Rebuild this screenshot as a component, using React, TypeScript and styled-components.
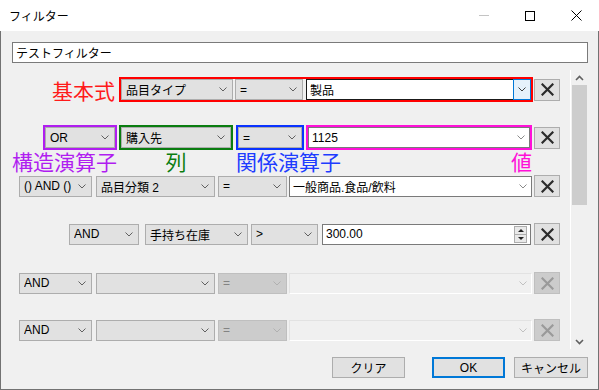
import React from "react";
import styled, { createGlobalStyle, css } from "styled-components";

const Global = createGlobalStyle`
  html, body { margin: 0; padding: 0; background: #ffffff; }
  * { box-sizing: border-box; }
`;

const UI_FONT = `"Liberation Sans", "Noto Sans CJK JP", sans-serif`;

const Win = styled.div`
  width: 599px;
  height: 390px;
  display: flex;
  flex-direction: column;
  background: #ffffff;
  font-family: ${UI_FONT};
  font-size: 12px;
  color: #000;
`;

const TitleBar = styled.div`
  height: 31px;
  flex: none;
  display: flex;
  align-items: center;
  background: #ffffff;
`;

const Title = styled.div`
  flex: 1;
  padding-left: 9px;
  font-family: "Noto Sans CJK JP", sans-serif;
  font-size: 12px;
`;

const Caption = styled.div`
  width: 46px;
  height: 31px;
  display: flex;
  align-items: center;
  justify-content: center;
`;

const Body = styled.div`
  flex: 1;
  display: flex;
  flex-direction: column;
  background: #f0f0f0;
  border: 1px solid #727272;
  border-top: none;
  padding: 11px 10px 0 11px;
`;

const NameInput = styled.div`
  width: 576px;
  height: 21px;
  flex: none;
  border: 1px solid #7a7a7a;
  background: #ffffff;
  display: flex;
  align-items: center;
  padding-left: 3px;
  font-family: "Noto Sans CJK JP", sans-serif;
`;

const ScrollArea = styled.div`
  margin-top: 7px;
  width: 576px;
  height: 279px;
  flex: none;
  display: flex;
`;

const Content = styled.div`
  flex: 1;
  display: flex;
  flex-direction: column;
  overflow: hidden;
`;

const Scrollbar = styled.div`
  width: 18px;
  flex: none;
  border-left: 1px solid #ffffff;
  background: #f0f0f0;
  display: flex;
  flex-direction: column;
`;

const ScrollArrow = styled.div`
  height: 15px;
  display: flex;
  align-items: center;
  justify-content: center;
`;

const Thumb = styled.div`
  margin: 0 1px 0 1px;
  height: 120px;
  background: #cdcdcd;
`;

const ScrollSpacer = styled.div`
  flex: 1;
`;

const Row = styled.div<{ $top: number; $indent: number }>`
  display: flex;
  align-items: center;
  margin-top: ${(p) => p.$top}px;
  margin-left: ${(p) => p.$indent}px;
  height: 22px;
`;

const BoxRow = styled(Row)`
  height: 25px;
`;

const SideLabel = styled.div<{ $color: string }>`
  width: 103px;
  display: flex;
  justify-content: flex-end;
  margin-right: 4px;
  color: ${(p) => p.$color};
  font-family: "Noto Sans CJK JP", sans-serif;
  font-size: 21px;
  line-height: 22px;
  white-space: nowrap;
`;

const Frame = styled.div<{ $color: string; $ml?: number }>`
  display: flex;
  align-items: center;
  border: 2px solid ${(p) => p.$color};
  margin-left: ${(p) => p.$ml ?? 0}px;
`;

const Combo = styled.div<{ $w: number; $ml?: number; $disabled?: boolean }>`
  width: ${(p) => p.$w}px;
  margin-left: ${(p) => p.$ml ?? 0}px;
  height: 21px;
  flex: none;
  display: flex;
  align-items: center;
  padding: 0 5px 0 4px;
  background: #e1e1e1;
  border: 1px solid #adadad;
  color: #000;
  white-space: nowrap;
  ${(p) =>
    p.$disabled &&
    css`
      background: #cccccc;
      border-color: #bfbfbf;
      color: #838383;
    `}
`;

const ComboText = styled.span`
  flex: 1;
  overflow: hidden;
  font-family: ${UI_FONT};
`;

const Field = styled.div<{ $w: number; $ml?: number; $variant?: "normal" | "focus" | "disabled" }>`
  width: ${(p) => p.$w}px;
  margin-left: ${(p) => p.$ml ?? 0}px;
  height: 21px;
  flex: none;
  display: flex;
  align-items: center;
  padding-left: 3px;
  background: #ffffff;
  border: 1px solid #7a7a7a;
  white-space: nowrap;
  ${(p) =>
    p.$variant === "focus" &&
    css`
      border-color: #1a1a1a;
    `}
  ${(p) =>
    p.$variant === "disabled" &&
    css`
      background: #f0f0f0;
      border-color: #e2e2e2;
      border-right-color: #ffffff;
      border-bottom-color: #ffffff;
    `}
`;

const FieldText = styled.span`
  flex: 1;
  font-family: ${UI_FONT};
`;

const DropBtn = styled.div`
  width: 18px;
  height: 21px;
  margin: -1px -1px -1px 0;
  display: flex;
  align-items: center;
  justify-content: center;
  background: #e5f1fb;
  border: 1px solid #0078d7;
`;

const FieldChevron = styled.div`
  width: 17px;
  display: flex;
  align-items: center;
  justify-content: center;
`;

const Spinner = styled.div`
  width: 13px;
  height: 17px;
  margin-right: 3px;
  display: flex;
  flex-direction: column;
  border: 1px solid #adadad;
  background: #e9e9e9;
`;

const SpinHalf = styled.div<{ $up?: boolean }>`
  flex: 1;
  display: flex;
  align-items: center;
  justify-content: center;
  ${(p) => p.$up && css`border-bottom: 1px solid #adadad;`}
`;

const Tri = styled.div<{ $up?: boolean }>`
  width: 0;
  height: 0;
  border-left: 3px solid transparent;
  border-right: 3px solid transparent;
  ${(p) =>
    p.$up
      ? css`border-bottom: 3px solid #222;`
      : css`border-top: 3px solid #222;`}
`;

const DelBtn = styled.div<{ $ml: number; $disabled?: boolean }>`
  width: 26px;
  height: 22px;
  margin-left: ${(p) => p.$ml}px;
  flex: none;
  display: flex;
  align-items: center;
  justify-content: center;
  background: ${(p) => (p.$disabled ? "#cccccc" : "#e1e1e1")};
  border: 1px solid ${(p) => (p.$disabled ? "#bfbfbf" : "#adadad")};
`;

const LabelRow = styled.div`
  display: flex;
  height: 22px;
  margin-left: 31px;
  font-family: "Noto Sans CJK JP", sans-serif;
  font-size: 21px;
  line-height: 22px;
  white-space: nowrap;
`;

const LabelCell = styled.div<{ $w: number; $ml: number; $color: string; $align: "flex-start" | "center" | "flex-end" }>`
  width: ${(p) => p.$w}px;
  margin-left: ${(p) => p.$ml}px;
  display: flex;
  justify-content: ${(p) => p.$align};
  color: ${(p) => p.$color};
`;

const Footer = styled.div`
  margin-top: 8px;
  display: flex;
  padding-left: 320px;
`;

const Button = styled.div<{ $w: number; $ml: number; $default?: boolean }>`
  width: ${(p) => p.$w}px;
  margin-left: ${(p) => p.$ml}px;
  height: 21px;
  display: flex;
  align-items: center;
  justify-content: center;
  background: #e1e1e1;
  border: ${(p) => (p.$default ? "2px solid #0078d7" : "1px solid #adadad")};
  font-family: ${UI_FONT};
`;

const Chevron = ({ color = "#606060" }: { color?: string }) => (
  <svg width="8" height="5" viewBox="0 0 8 5">
    <polyline points="0.5,0.5 4,4 7.5,0.5" fill="none" stroke={color} strokeWidth="1" />
  </svg>
);

const XIcon = ({ color = "#2b2b2b" }: { color?: string }) => (
  <svg width="13" height="13" viewBox="0 0 13 13">
    <path d="M1.5 1.5 L11.5 11.5 M11.5 1.5 L1.5 11.5" stroke={color} strokeWidth="2.2" strokeLinecap="square" />
  </svg>
);

const ComboBox = ({ w, ml, text, disabled }: { w: number; ml?: number; text: string; disabled?: boolean }) => (
  <Combo $w={w} $ml={ml} $disabled={disabled}>
    <ComboText>{text}</ComboText>
    <Chevron color={disabled ? "#b0b0b0" : "#606060"} />
  </Combo>
);

const Del = ({ ml, disabled }: { ml: number; disabled?: boolean }) => (
  <DelBtn $ml={ml} $disabled={disabled}>
    <XIcon color={disabled ? "#9a9a9a" : "#2b2b2b"} />
  </DelBtn>
);

export default function App() {
  return (
    <Win>
      <Global />
      <TitleBar>
        <Title>フィルター</Title>
        <Caption>
          <svg width="10" height="1" viewBox="0 0 10 1">
            <rect width="10" height="1" fill="#c4c4c4" />
          </svg>
        </Caption>
        <Caption>
          <svg width="10" height="10" viewBox="0 0 10 10">
            <rect x="0.5" y="0.5" width="9" height="9" fill="none" stroke="#000" strokeWidth="1" />
          </svg>
        </Caption>
        <Caption>
          <svg width="11" height="11" viewBox="0 0 11 11">
            <path d="M0.5 0.5 L10.5 10.5 M10.5 0.5 L0.5 10.5" stroke="#000" strokeWidth="1" />
          </svg>
        </Caption>
      </TitleBar>
      <Body>
        <NameInput>テストフィルター</NameInput>
        <ScrollArea>
          <Content>
            <BoxRow $top={7} $indent={0}>
              <SideLabel $color="#ff1a1a">基本式</SideLabel>
              <Frame $color="#ff0000">
                <ComboBox w={112} text="品目タイプ" />
                <ComboBox w={68} ml={2} text="=" />
                <Field $w={225} $ml={3} $variant="focus">
                  <FieldText>製品</FieldText>
                  <DropBtn>
                    <Chevron color="#404040" />
                  </DropBtn>
                </Field>
              </Frame>
              <Del ml={1} />
            </BoxRow>

            <BoxRow $top={23} $indent={31}>
              <Frame $color="#b01ef0">
                <ComboBox w={70} text="OR" />
              </Frame>
              <Frame $color="#0a7d10" $ml={2}>
                <ComboBox w={110} text="購入先" />
              </Frame>
              <Frame $color="#0a32ff" $ml={3}>
                <ComboBox w={64} text="=" />
              </Frame>
              <Frame $color="#ff10d8" $ml={2}>
                <Field $w={222}>
                  <FieldText>1125</FieldText>
                  <FieldChevron>
                    <Chevron color="#8a8a8a" />
                  </FieldChevron>
                </Field>
              </Frame>
              <Del ml={2} />
            </BoxRow>

            <LabelRow>
              <LabelCell $w={74} $ml={0} $color="#b01ef0" $align="flex-end">
                構造演算子
              </LabelCell>
              <LabelCell $w={114} $ml={2} $color="#0a7d10" $align="center">
                列
              </LabelCell>
              <LabelCell $w={68} $ml={3} $color="#1e3cff" $align="flex-start">
                関係演算子
              </LabelCell>
              <LabelCell $w={226} $ml={2} $color="#ff10d8" $align="flex-end">
                値
              </LabelCell>
            </LabelRow>

            <Row $top={3} $indent={7}>
              <ComboBox w={73} text="() AND ()" />
              <ComboBox w={119} ml={4} text="品目分類 2" />
              <ComboBox w={69} ml={3} text="=" />
              <Field $w={243} $ml={2}>
                <FieldText>一般商品.食品/飲料</FieldText>
                <FieldChevron>
                  <Chevron color="#8a8a8a" />
                </FieldChevron>
              </Field>
              <Del ml={2} />
            </Row>

            <Row $top={26} $indent={57}>
              <ComboBox w={70} text="AND" />
              <ComboBox w={103} ml={6} text="手持ち在庫" />
              <ComboBox w={67} ml={3} text=">" />
              <Field $w={209} $ml={4}>
                <FieldText>300.00</FieldText>
                <Spinner>
                  <SpinHalf $up>
                    <Tri $up />
                  </SpinHalf>
                  <SpinHalf>
                    <Tri />
                  </SpinHalf>
                </Spinner>
              </Field>
              <Del ml={3} />
            </Row>

            <Row $top={27} $indent={7}>
              <ComboBox w={73} text="AND" />
              <ComboBox w={119} ml={4} text="" />
              <ComboBox w={69} ml={3} text="=" disabled />
              <Field $w={243} $ml={2} $variant="disabled">
                <FieldText />
                <FieldChevron>
                  <Chevron color="#c0c0c0" />
                </FieldChevron>
              </Field>
              <Del ml={2} disabled />
            </Row>

            <Row $top={25} $indent={7}>
              <ComboBox w={73} text="AND" />
              <ComboBox w={119} ml={4} text="" />
              <ComboBox w={69} ml={3} text="=" disabled />
              <Field $w={243} $ml={2} $variant="disabled">
                <FieldText />
                <FieldChevron>
                  <Chevron color="#c0c0c0" />
                </FieldChevron>
              </Field>
              <Del ml={2} disabled />
            </Row>
          </Content>
          <Scrollbar>
            <ScrollArrow>
              <svg width="9" height="6" viewBox="0 0 9 6">
                <polyline points="1,5 4.5,1.5 8,5" fill="none" stroke="#606060" strokeWidth="1.6" />
              </svg>
            </ScrollArrow>
            <Thumb />
            <ScrollSpacer />
            <ScrollArrow>
              <svg width="9" height="6" viewBox="0 0 9 6">
                <polyline points="1,1 4.5,4.5 8,1" fill="none" stroke="#606060" strokeWidth="1.6" />
              </svg>
            </ScrollArrow>
          </Scrollbar>
        </ScrollArea>
        <Footer>
          <Button $w={73} $ml={0}>クリア</Button>
          <Button $w={73} $ml={27} $default>
            OK
          </Button>
          <Button $w={74} $ml={9}>キャンセル</Button>
        </Footer>
      </Body>
    </Win>
  );
}
